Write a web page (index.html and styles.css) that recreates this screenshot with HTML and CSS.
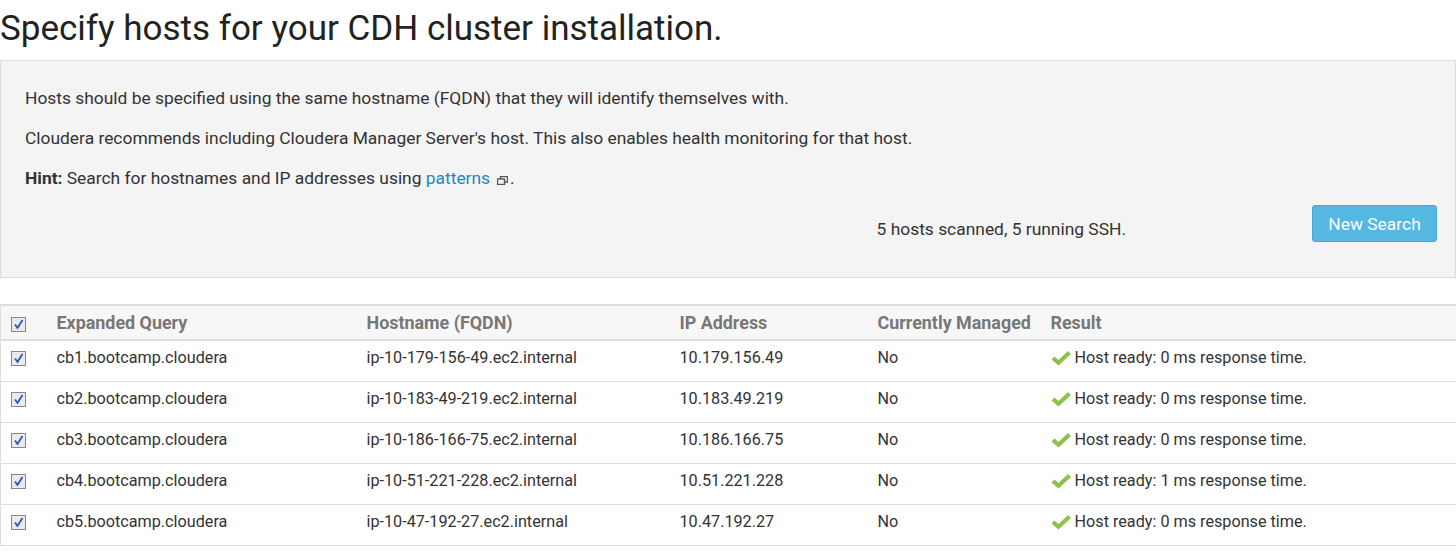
FILE: index.html
```html
<!DOCTYPE html>
<html>
<head>
<meta charset="utf-8">
<link rel="stylesheet" href="styles.css">
</head>
<body>
<h1 class="title">Specify hosts for your CDH cluster installation.</h1>
<div class="panel">
  <p>Hosts should be specified using the same hostname (FQDN) that they will identify themselves with.</p>
  <p>Cloudera recommends including Cloudera Manager Server's host. This also enables health monitoring for that host.</p>
  <p><strong>Hint:</strong> Search for hostnames and IP addresses using <a class="link" href="#">patterns</a><svg class="ext" width="11" height="9" viewBox="0 0 11 9"><rect x="3.5" y="0.5" width="7" height="5.5" fill="none" stroke="#555" stroke-width="1.4"/><rect x="0.5" y="3" width="7" height="5.5" fill="#f4f4f4" stroke="#555" stroke-width="1.4"/></svg>.</p>
  <div class="status-row">
    <span class="status">5 hosts scanned, 5 running SSH.</span>
    <button class="btn">New Search</button>
  </div>
</div>
<table class="hosts">
  <colgroup>
    <col class="c1"><col class="c2"><col class="c3"><col class="c4"><col class="c5"><col>
  </colgroup>
  <thead>
    <tr>
      <th><span class="cb"><svg width="11" height="11" viewBox="0 0 11 11"><path d="M2 5.5 L4.5 9 L9.5 1" fill="none" stroke="#2f55b0" stroke-width="1.8"/></svg></span></th>
      <th>Expanded Query</th>
      <th>Hostname (FQDN)</th>
      <th>IP Address</th>
      <th>Currently Managed</th>
      <th>Result</th>
    </tr>
  </thead>
  <tbody>
    <tr>
      <td><span class="cb"><svg width="11" height="11" viewBox="0 0 11 11"><path d="M2 5.5 L4.5 9 L9.5 1" fill="none" stroke="#2f55b0" stroke-width="1.8"/></svg></span></td>
      <td>cb1.bootcamp.cloudera</td>
      <td>ip-10-179-156-49.ec2.internal</td>
      <td>10.179.156.49</td>
      <td>No</td>
      <td><svg class="ok" width="20" height="16" viewBox="0 0 20 16"><path d="M0.5 9.5 L3.5 6.5 L7.5 10 L17 1 L20 4 L7.5 15.5 Z" fill="#8bc34a"/></svg>Host ready: 0 ms response time.</td>
    </tr>
    <tr>
      <td><span class="cb"><svg width="11" height="11" viewBox="0 0 11 11"><path d="M2 5.5 L4.5 9 L9.5 1" fill="none" stroke="#2f55b0" stroke-width="1.8"/></svg></span></td>
      <td>cb2.bootcamp.cloudera</td>
      <td>ip-10-183-49-219.ec2.internal</td>
      <td>10.183.49.219</td>
      <td>No</td>
      <td><svg class="ok" width="20" height="16" viewBox="0 0 20 16"><path d="M0.5 9.5 L3.5 6.5 L7.5 10 L17 1 L20 4 L7.5 15.5 Z" fill="#8bc34a"/></svg>Host ready: 0 ms response time.</td>
    </tr>
    <tr>
      <td><span class="cb"><svg width="11" height="11" viewBox="0 0 11 11"><path d="M2 5.5 L4.5 9 L9.5 1" fill="none" stroke="#2f55b0" stroke-width="1.8"/></svg></span></td>
      <td>cb3.bootcamp.cloudera</td>
      <td>ip-10-186-166-75.ec2.internal</td>
      <td>10.186.166.75</td>
      <td>No</td>
      <td><svg class="ok" width="20" height="16" viewBox="0 0 20 16"><path d="M0.5 9.5 L3.5 6.5 L7.5 10 L17 1 L20 4 L7.5 15.5 Z" fill="#8bc34a"/></svg>Host ready: 0 ms response time.</td>
    </tr>
    <tr>
      <td><span class="cb"><svg width="11" height="11" viewBox="0 0 11 11"><path d="M2 5.5 L4.5 9 L9.5 1" fill="none" stroke="#2f55b0" stroke-width="1.8"/></svg></span></td>
      <td>cb4.bootcamp.cloudera</td>
      <td>ip-10-51-221-228.ec2.internal</td>
      <td>10.51.221.228</td>
      <td>No</td>
      <td><svg class="ok" width="20" height="16" viewBox="0 0 20 16"><path d="M0.5 9.5 L3.5 6.5 L7.5 10 L17 1 L20 4 L7.5 15.5 Z" fill="#8bc34a"/></svg>Host ready: 1 ms response time.</td>
    </tr>
    <tr>
      <td><span class="cb"><svg width="11" height="11" viewBox="0 0 11 11"><path d="M2 5.5 L4.5 9 L9.5 1" fill="none" stroke="#2f55b0" stroke-width="1.8"/></svg></span></td>
      <td>cb5.bootcamp.cloudera</td>
      <td>ip-10-47-192-27.ec2.internal</td>
      <td>10.47.192.27</td>
      <td>No</td>
      <td><svg class="ok" width="20" height="16" viewBox="0 0 20 16"><path d="M0.5 9.5 L3.5 6.5 L7.5 10 L17 1 L20 4 L7.5 15.5 Z" fill="#8bc34a"/></svg>Host ready: 0 ms response time.</td>
    </tr>
  </tbody>
</table>
</body>
</html>
```
FILE: styles.css
```css
html, body {
  margin: 0;
  padding: 0;
  background: #fff;
  font-family: Roboto, "Liberation Sans", sans-serif;
  color: #333;
}
.title {
  margin: 0;
  padding-top: 7px;
  height: 53px;
  font-size: 35px;
  font-weight: 400;
  color: #222;
  line-height: 44px;
}
.panel {
  background: #f4f4f4;
  border: 1px solid #ddd;
  padding: 17px 18px 37px 24px;
  font-size: 17.4px;
  height: 162px;
}
.panel p {
  margin: 0;
  line-height: 40px;
}
.panel strong { font-weight: 700; }
.link {
  color: #1a8ac0;
  text-decoration: none;
}
.ext {
  margin: 0 2px 0 7px;
  vertical-align: -1px;
}
.status-row {
  display: flex;
  justify-content: flex-end;
  align-items: center;
  margin-top: 7px;
}
.status {
  margin-right: 186px;
  margin-top: 10px;
}
.btn {
  font-family: Roboto, "Liberation Sans", sans-serif;
  font-size: 17.4px;
  color: #fff;
  background: #55b8e2;
  border: 1px solid #47a7d2;
  border-radius: 3px;
  width: 125px;
  height: 37px;
  padding: 0;
}
.hosts {
  margin-top: 26px;
  width: 100%;
  border-collapse: collapse;
  table-layout: fixed;
  border-left: 1px solid #ddd;
  border-bottom: 1px solid #ddd;
}
.c1 { width: 46px; }
.c2 { width: 310px; }
.c3 { width: 313px; }
.c4 { width: 198px; }
.c5 { width: 173px; }
.hosts th {
  text-align: left;
  font-weight: 700;
  font-size: 17.9px;
  color: #777;
  background: #f7f7f7;
  border-top: 2px solid #ddd;
  border-bottom: 2px solid #ddd;
  height: 33px;
  padding: 0 0 0 10px;
}
.hosts td {
  font-size: 16.2px;
  color: #333;
  height: 32px;
  padding: 0 0 8px 10px;
  border-bottom: 1px solid #ddd;
}
.cb {
  display: inline-flex;
  align-items: center;
  justify-content: center;
  width: 13px;
  height: 13px;
  border: 1px solid #888;
  background: #e8eaf0;
  vertical-align: middle;
}
.ok {
  vertical-align: -3px;
  margin-right: 4px;
}
```
